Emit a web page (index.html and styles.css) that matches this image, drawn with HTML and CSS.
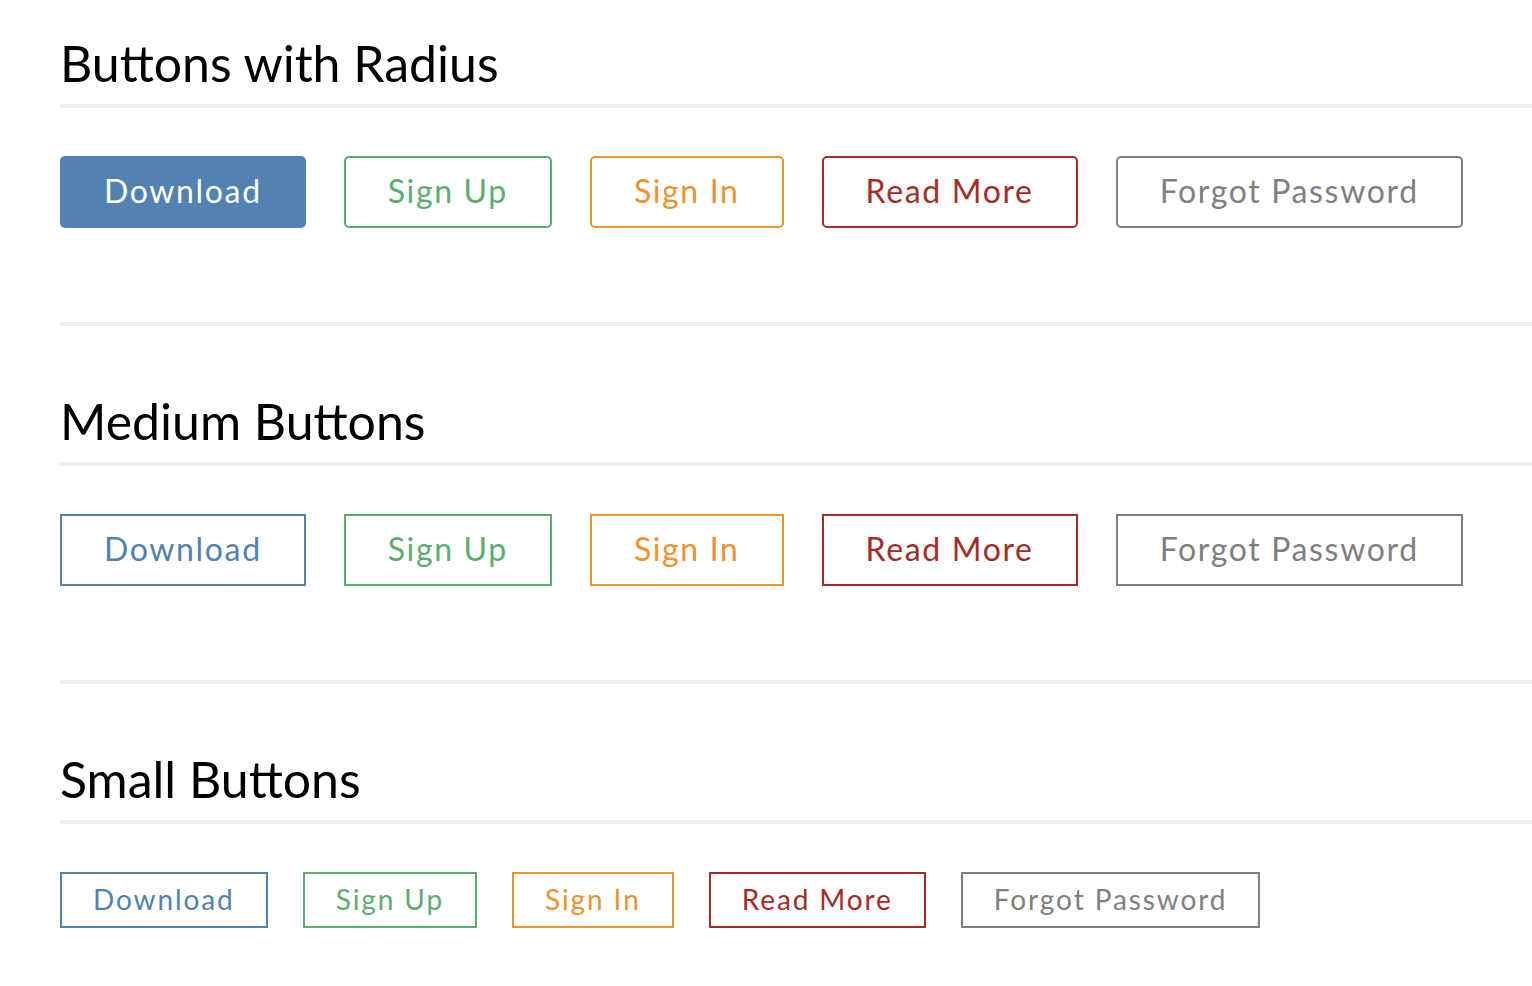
FILE: index.html
```html
<!DOCTYPE html>
<html lang="en">
<head>
<meta charset="utf-8">
<title>Buttons</title>
<link rel="stylesheet" href="styles.css">
</head>
<body>
<main class="page">
  <section class="group">
    <h2 class="group-title">Buttons with Radius</h2>
    <div class="btn-row">
      <a class="btn btn-lg btn-round btn-blue-fill">Download</a>
      <a class="btn btn-lg btn-round btn-green">Sign Up</a>
      <a class="btn btn-lg btn-round btn-orange">Sign In</a>
      <a class="btn btn-lg btn-round btn-red">Read More</a>
      <a class="btn btn-lg btn-round btn-gray">Forgot Password</a>
    </div>
  </section>
  <hr class="divider">
  <section class="group">
    <h2 class="group-title">Medium Buttons</h2>
    <div class="btn-row">
      <a class="btn btn-lg btn-blue">Download</a>
      <a class="btn btn-lg btn-green">Sign Up</a>
      <a class="btn btn-lg btn-orange">Sign In</a>
      <a class="btn btn-lg btn-red">Read More</a>
      <a class="btn btn-lg btn-gray">Forgot Password</a>
    </div>
  </section>
  <hr class="divider">
  <section class="group">
    <h2 class="group-title">Small Buttons</h2>
    <div class="btn-row btn-row-sm">
      <a class="btn btn-sm btn-blue">Download</a>
      <a class="btn btn-sm btn-green">Sign Up</a>
      <a class="btn btn-sm btn-orange">Sign In</a>
      <a class="btn btn-sm btn-red">Read More</a>
      <a class="btn btn-sm btn-gray">Forgot Password</a>
    </div>
  </section>
</main>
</body>
</html>
```

FILE: styles.css
```css
html, body {
  margin: 0;
  padding: 0;
  background: #ffffff;
}

body {
  font-family: Lato, "Open Sans", "Liberation Sans", sans-serif;
  color: #000;
}

.page {
  padding: 35px 0 0 60px;
}

.group-title {
  margin: 0;
  font-size: 50px;
  font-weight: 400;
  line-height: 56px;
  letter-spacing: 0;
  padding-bottom: 13px;
  border-bottom: 4px solid #eeeeee;
}

.divider {
  margin: 0;
  border: 0;
  height: 4px;
  background: #eeeeee;
}

.group + .divider {
  margin-top: 94px;
}

.divider + .group {
  padding-top: 67px;
}

.btn-row {
  display: flex;
  gap: 38px;
  margin-top: 48px;
}

.btn-row-sm {
  gap: 35px;
}

.btn {
  display: block;
  box-sizing: border-box;
  border: 2px solid currentColor;
  background: #fff;
  white-space: nowrap;
  text-align: center;
  cursor: pointer;
}

.btn-lg {
  height: 72px;
  padding: 0 42px;
  font-size: 32px;
  line-height: 66px;
  letter-spacing: 1.65px;
}

.btn-sm {
  height: 56px;
  padding: 0 31px;
  font-size: 28px;
  line-height: 51px;
  letter-spacing: 1.9px;
}

.btn-round {
  border-radius: 5px;
}

.btn-blue { color: #5182b2; }
.btn-green { color: #5dad71; }
.btn-orange { color: #f0912f; }
.btn-red { color: #a52c26; }
.btn-gray { color: #7f7f7f; }

.btn-blue-fill {
  color: #ffffff;
  background: #5182b2;
  border-color: #5182b2;
}
```
